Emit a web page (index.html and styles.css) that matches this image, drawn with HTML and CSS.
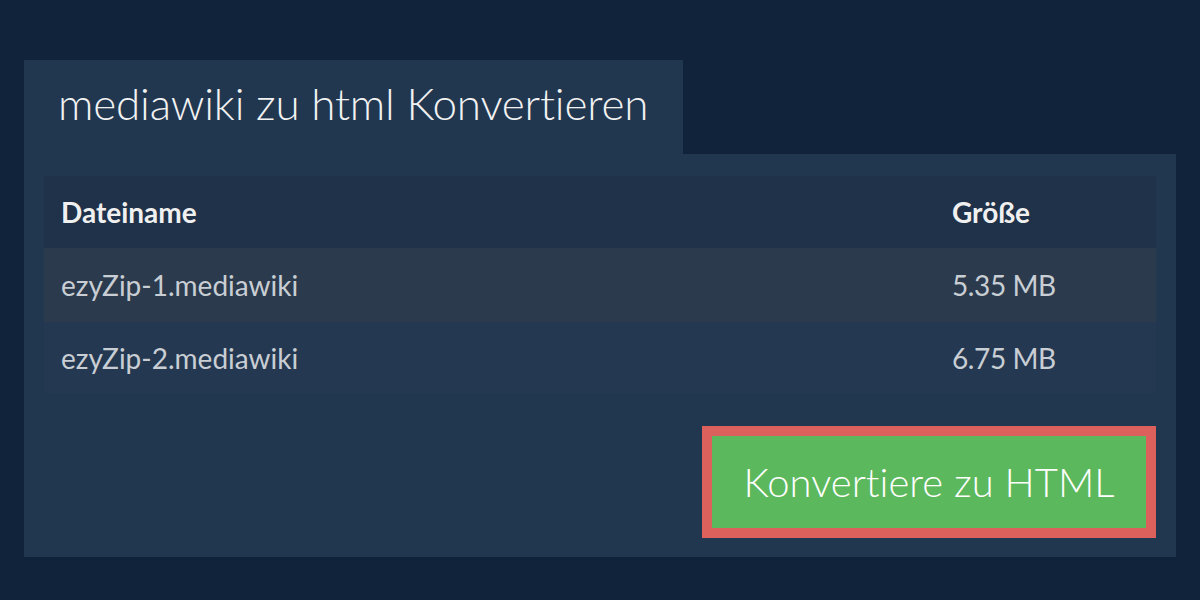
FILE: index.html
```html
<!DOCTYPE html>
<html lang="de">
<head>
<meta charset="utf-8">
<link rel="stylesheet" href="styles.css">
</head>
<body>
<div class="wrap">
  <div class="tab"><h1 class="title">mediawiki zu html Konvertieren</h1></div>
  <div class="panel">
    <div class="table">
      <div class="row head"><div class="name">Dateiname</div><div class="size">Größe</div></div>
      <div class="row odd"><div class="name">ezyZip-1.mediawiki</div><div class="size">5.35 MB</div></div>
      <div class="row even"><div class="name">ezyZip-2.mediawiki</div><div class="size">6.75 MB</div></div>
    </div>
    <div class="actions"><button class="btn">Konvertiere zu HTML</button></div>
  </div>
</div>
</body>
</html>
```
FILE: styles.css
```css
html, body { margin: 0; padding: 0; }
body {
  width: 1200px; height: 600px; overflow: hidden;
  background: #10233a;
  font-family: Lato, "Open Sans", sans-serif;
  font-variant-ligatures: none;
}
.wrap { padding: 60px 24px 0 24px; }
.tab {
  width: 659px; height: 94px; box-sizing: border-box;
  background: #213750;
  padding-left: 34px; padding-bottom: 8px;
  display: flex; align-items: center;
}
.title {
  margin: 0; font-size: 44px; font-weight: 300; color: #f2f2f2;
  letter-spacing: -0.17px;
}
.panel {
  background: #213750;
  height: 403px; box-sizing: border-box;
  padding: 22px 20px 0 20px;
}
.table { display: flex; flex-direction: column; }
.row { display: flex; align-items: center; padding-left: 17px; }
.row .name { width: 891px; }
.head { height: 72px; background: #1f3249; color: #f0f0f0; font-weight: 700; font-size: 28px; }
.odd { height: 74px; background: #2b3b4d; color: #c9ced4; font-size: 28px; }
.even { height: 71px; background: #243951; color: #c9ced4; font-size: 28px; }
.size { letter-spacing: -0.4px; }
.head .size { letter-spacing: 0; }
.actions { display: flex; justify-content: flex-end; padding-top: 33px; }
.btn {
  width: 454px; height: 112px; box-sizing: border-box;
  border: 10px solid #dc605c; background: #5cb85c;
  color: #fff; font-family: Lato, sans-serif; font-size: 40px; font-weight: 300;
  font-variant-ligatures: none;
  padding: 0; cursor: pointer;
}
```
